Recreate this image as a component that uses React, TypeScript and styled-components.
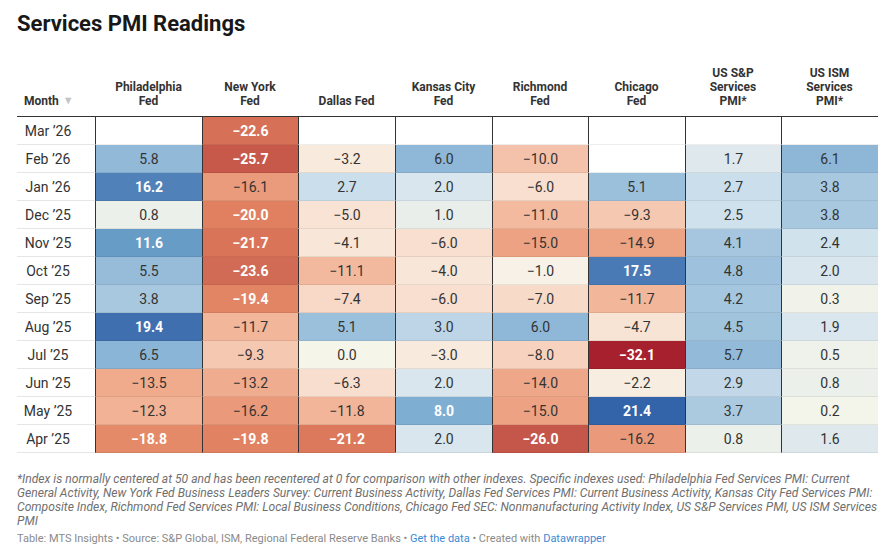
import React from "react";
import styled, { createGlobalStyle } from "styled-components";

const GlobalStyle = createGlobalStyle`
  html, body { margin: 0; padding: 0; background: #ffffff; }
  body { font-family: Roboto, "Liberation Sans", Arial, sans-serif; color: #333333; }
  * { box-sizing: border-box; }
`;

const COLS = "78px 107px 96px 97px 97px 96px 97px 96px 97px";

const Page = styled.div`
  width: 896px;
  padding: 12px 17px 0 17px;
  font-family: Roboto, "Liberation Sans", Arial, sans-serif;
`;

const Title = styled.h1`
  margin: 0;
  font-size: 22px;
  line-height: 24px;
  font-weight: 700;
  color: #181818;
`;

const Table = styled.div`
  display: flex;
  flex-direction: column;
  width: 861px;
`;

const HeaderRow = styled.div`
  display: grid;
  grid-template-columns: ${COLS};
  height: 81px;
  border-bottom: 1px solid #333333;
`;

const HeaderCell = styled.div<{ $left?: boolean }>`
  display: flex;
  align-items: flex-end;
  justify-content: ${(p) => (p.$left ? "flex-start" : "center")};
  text-align: ${(p) => (p.$left ? "left" : "center")};
  padding: 0 ${(p) => (p.$left ? "0 8px 7px" : "4px 8px")};
  font-size: 12px;
  line-height: 14px;
  font-weight: 700;
  color: #333333;
`;

const SortArrow = styled.span`
  color: #c4c4c4;
  font-size: 11px;
  margin-left: 4px;
  font-weight: 400;
  line-height: 14px;
`;

const Row = styled.div`
  display: grid;
  grid-template-columns: ${COLS};
  height: 28px;
`;

const MonthCell = styled.div`
  display: flex;
  align-items: center;
  justify-content: center;
  padding: 0 24px 0 8px;
  font-size: 14px;
  color: #333333;
  border-bottom: 1px solid #e6e6e6;
  white-space: nowrap;
`;

const ValueCell = styled.div<{ $bg: string; $light: boolean }>`
  display: flex;
  align-items: center;
  justify-content: center;
  font-size: 14px;
  background: ${(p) => p.$bg};
  color: ${(p) => (p.$light ? "#ffffff" : "#333333")};
  font-weight: ${(p) => (p.$light ? 700 : 400)};
  border-left: 1px solid #333333;
  border-bottom: 1px solid rgba(0, 0, 0, 0.07);
  white-space: nowrap;
`;

const Note = styled.p`
  margin: 19px 0 0 0;
  font-size: 12.1px;
  line-height: 14px;
  font-style: italic;
  color: #6f6f6f;
`;

const Byline = styled.p`
  margin: 4px 0 0 0;
  font-size: 11px;
  line-height: 14px;
  color: #8a8a8a;
`;

const Link = styled.span`
  color: #3a8ad3;
`;

type Stop = [number, string];
const STOPS: Stop[] = [
  [-32.1, "#a6202e"],
  [-26.0, "#c5564a"],
  [-23.6, "#d26b55"],
  [-21.7, "#da7459"],
  [-20.0, "#e08060"],
  [-18.8, "#e48a69"],
  [-16.1, "#ea9b7b"],
  [-15.0, "#eda383"],
  [-13.2, "#efac8e"],
  [-11.0, "#f3baa0"],
  [-9.3, "#f5c8b1"],
  [-7.4, "#f8d8c6"],
  [-6.0, "#f8dfd0"],
  [-4.0, "#f8e7d8"],
  [-1.0, "#f7f1e7"],
  [0, "#f5f5ea"],
  [0.5, "#eff2ea"],
  [1.0, "#e9eeeb"],
  [2.0, "#d9e6ee"],
  [2.7, "#cadfeb"],
  [3.0, "#bed5e7"],
  [3.8, "#a8c8df"],
  [5.1, "#9bc0dc"],
  [6.0, "#8fb7d7"],
  [8.0, "#7eaed2"],
  [11.6, "#679cc7"],
  [16.2, "#5081b9"],
  [19.4, "#406fb0"],
  [21.4, "#3363a9"],
];

const hex = (h: string) => [
  parseInt(h.slice(1, 3), 16),
  parseInt(h.slice(3, 5), 16),
  parseInt(h.slice(5, 7), 16),
];

function colorFor(v: number): string {
  if (v <= STOPS[0][0]) return STOPS[0][1];
  if (v >= STOPS[STOPS.length - 1][0]) return STOPS[STOPS.length - 1][1];
  for (let i = 0; i < STOPS.length - 1; i++) {
    const [a, ca] = STOPS[i];
    const [b, cb] = STOPS[i + 1];
    if (v >= a && v <= b) {
      const t = (v - a) / (b - a);
      const A = hex(ca);
      const B = hex(cb);
      const c = A.map((x, k) => Math.round(x + (B[k] - x) * t));
      return `rgb(${c[0]}, ${c[1]}, ${c[2]})`;
    }
  }
  return "#ffffff";
}

const fmt = (v: number) => (v < 0 ? "\u2212" + Math.abs(v).toFixed(1) : v.toFixed(1));

type N = number | null;
const DATA: [string, N[]][] = [
  ["Mar \u201926", [null, -22.6, null, null, null, null, null, null]],
  ["Feb \u201926", [5.8, -25.7, -3.2, 6.0, -10.0, null, 1.7, 6.1]],
  ["Jan \u201926", [16.2, -16.1, 2.7, 2.0, -6.0, 5.1, 2.7, 3.8]],
  ["Dec \u201925", [0.8, -20.0, -5.0, 1.0, -11.0, -9.3, 2.5, 3.8]],
  ["Nov \u201925", [11.6, -21.7, -4.1, -6.0, -15.0, -14.9, 4.1, 2.4]],
  ["Oct \u201925", [5.5, -23.6, -11.1, -4.0, -1.0, 17.5, 4.8, 2.0]],
  ["Sep \u201925", [3.8, -19.4, -7.4, -6.0, -7.0, -11.7, 4.2, 0.3]],
  ["Aug \u201925", [19.4, -11.7, 5.1, 3.0, 6.0, -4.7, 4.5, 1.9]],
  ["Jul \u201925", [6.5, -9.3, 0.0, -3.0, -8.0, -32.1, 5.7, 0.5]],
  ["Jun \u201925", [-13.5, -13.2, -6.3, 2.0, -14.0, -2.2, 2.9, 0.8]],
  ["May \u201925", [-12.3, -16.2, -11.8, 8.0, -15.0, 21.4, 3.7, 0.2]],
  ["Apr \u201925", [-18.8, -19.8, -21.2, 2.0, -26.0, -16.2, 0.8, 1.6]],
];

const HEADERS: string[][] = [
  ["Philadelphia", "Fed"],
  ["New York", "Fed"],
  ["Dallas Fed"],
  ["Kansas City", "Fed"],
  ["Richmond", "Fed"],
  ["Chicago", "Fed"],
  ["US S&P", "Services", "PMI*"],
  ["US ISM", "Services", "PMI*"],
];

export default function App() {
  return (
    <>
      <GlobalStyle />
      <Page>
        <Title>Services PMI Readings</Title>
        <Table>
          <HeaderRow>
            <HeaderCell $left>
              Month<SortArrow>▼</SortArrow>
            </HeaderCell>
            {HEADERS.map((lines, i) => (
              <HeaderCell key={i}>
                <span>
                  {lines.map((l, j) => (
                    <React.Fragment key={j}>
                      {j > 0 && <br />}
                      {l}
                    </React.Fragment>
                  ))}
                </span>
              </HeaderCell>
            ))}
          </HeaderRow>
          {DATA.map(([month, vals]) => (
            <Row key={month}>
              <MonthCell>{month}</MonthCell>
              {vals.map((v, i) =>
                v === null ? (
                  <ValueCell key={i} $bg="#ffffff" $light={false} />
                ) : (
                  <ValueCell key={i} $bg={colorFor(v)} $light={v >= 7.5 || v <= -17.5}>
                    {fmt(v)}
                  </ValueCell>
                )
              )}
            </Row>
          ))}
        </Table>
        <Note>
          *Index is normally centered at 50 and has been recentered at 0 for comparison with other
          indexes. Specific indexes used: Philadelphia Fed Services PMI: Current General Activity, New
          York Fed Business Leaders Survey: Current Business Activity, Dallas Fed Services PMI: Current
          Business Activity, Kansas City Fed Services PMI: Composite Index, Richmond Fed Services PMI:
          Local Business Conditions, Chicago Fed SEC: Nonmanufacturing Activity Index, US S&amp;P
          Services PMI, US ISM Services PMI
        </Note>
        <Byline>
          Table: MTS Insights • Source: S&amp;P Global, ISM, Regional Federal Reserve Banks •{" "}
          <Link>Get the data</Link> • Created with <Link>Datawrapper</Link>
        </Byline>
      </Page>
    </>
  );
}
